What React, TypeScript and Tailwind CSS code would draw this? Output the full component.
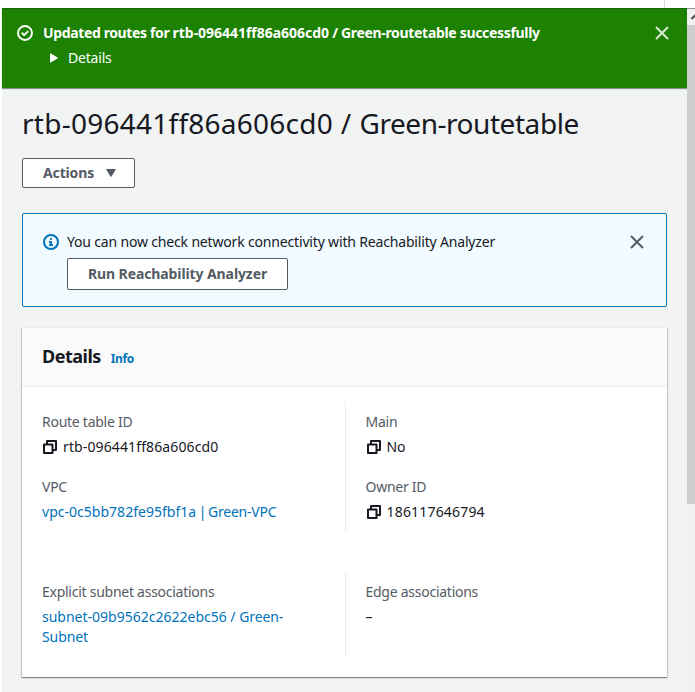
import type { ReactNode } from "react";

function CloseIcon({ className }: { className: string }) {
  return (
    <svg viewBox="0 0 16 16" className={"h-4 w-4 " + className} fill="none" stroke="currentColor" strokeWidth="2" strokeLinecap="butt">
      <path d="M2 2l12 12M14 2L2 14" />
    </svg>
  );
}

function CopyIcon() {
  return (
    <svg viewBox="0 0 16 16" className="h-4 w-4 shrink-0 text-[#16191f]" fill="none" stroke="currentColor" strokeWidth="2" strokeLinejoin="round">
      <path d="M2 5.5h8.5V14H2z" />
      <path d="M5 5.5V2h9v9h-3.5" />
    </svg>
  );
}

function Field({ label, children }: { label: string; children: ReactNode }) {
  return (
    <div className="flex flex-col gap-[5px]">
      <div className="tracking-[-0.26px] text-[#545b64]">{label}</div>
      <div className="flex items-center gap-[5px]">{children}</div>
    </div>
  );
}

export default function App() {
  return (
    <div className="flex h-[692px] w-[695px] flex-col overflow-hidden bg-white font-['Noto_Sans','Open_Sans',sans-serif] text-[14px] leading-5 text-[#16191f]">
      <div className="flex h-2 shrink-0 justify-end pr-[30px]">
        <div className="w-px bg-[#d5dbdb]" />
      </div>
      <div className="flex min-h-0 flex-1 pl-[2px]">
        <div className="flex w-[685px] shrink-0 flex-col bg-[#f2f3f3]">
          <header className="flex h-20 shrink-0 items-start border-t border-[#1a6604] bg-[#1d8102] pt-[14px] pr-[17px] pl-[15px] text-white shadow-[0_1px_1px_0_#879596]">
            <svg viewBox="0 0 16 16" className="mt-[2px] h-4 w-4" fill="none" stroke="currentColor" strokeWidth="1.9">
              <circle cx="8" cy="8" r="7" />
              <path d="M4.7 7.8l2.4 2.2 4.2-3.9" />
            </svg>
            <div className="ml-[10px] flex-1">
              <div className="whitespace-nowrap font-bold tracking-[-0.37px]">
                Updated routes for <span className="tracking-[-0.03px]">rtb-096441ff86a606cd0</span> / <span className="tracking-[-0.32px]">Green-routetable successfully</span>
              </div>
              <div className="mt-[5px] flex items-center gap-[10px] pl-[7px]">
                <svg viewBox="0 0 8 10" className="h-[10px] w-2" fill="currentColor" stroke="currentColor" strokeWidth="1" strokeLinejoin="round"><path d="M.5.8L7.5 5l-7 4.2z" /></svg>
                <span className="tracking-[-0.2px]">Details</span>
              </div>
            </div>
            <CloseIcon className="mt-[2px] text-[#d9ead6]" />
          </header>
          <main className="flex flex-col pt-[17px] pr-5 pl-5">
            <h1 className="h-9 whitespace-nowrap text-[28px] leading-9 tracking-[0.5px]">
              <span className="tracking-[0.25px]">rtb-096441ff86a606cd0</span> / <span className="tracking-[-0.45px]">Green-routetable</span>
            </h1>
            <button className="mt-[17px] flex h-[30px] w-[113px] items-center gap-3 rounded-[2px] border border-[#545b64] bg-white pl-5 font-bold tracking-[-0.14px] text-[#545b64]">
              <span>Actions</span>
              <svg viewBox="0 0 10 8" className="h-2 w-[10px]" fill="currentColor" stroke="currentColor" strokeWidth="1" strokeLinejoin="round"><path d="M.7.5h8.6L5 7.5z" /></svg>
            </button>
            <section className="mt-[25px] flex h-[94px] items-start rounded-[2px] border border-[#0073bb] bg-[#f1faff] pt-[18px] pr-[21px] pl-5">
              <svg viewBox="0 0 16 16" className="mt-[2px] h-4 w-4 text-[#0073bb]" fill="none" stroke="currentColor" strokeWidth="2">
                <circle cx="8" cy="8" r="7" />
                <path d="M8 4v2M6 8h2v3M6 11.2h4" strokeWidth="1.8" />
              </svg>
              <div className="ml-2 flex-1">
                <div className="whitespace-nowrap tracking-[-0.17px]">You can now check network connectivity with Reachability Analyzer</div>
                <button className="mt-[6px] flex h-8 w-[221px] items-center justify-center rounded-[2px] border border-[#545b64] bg-white font-bold tracking-[-0.1px] whitespace-nowrap text-[#545b64]">Run Reachability Analyzer</button>
              </div>
              <CloseIcon className="mt-[2px] text-[#545b64]" />
            </section>
            <section className="mt-5 flex h-[350px] flex-col border-t border-[#eaeded] bg-white shadow-[0_1px_1px_0_rgba(0,28,36,0.3),1px_1px_1px_0_rgba(0,28,36,0.15),-1px_1px_1px_0_rgba(0,28,36,0.15)]">
              <div className="flex h-[59px] shrink-0 items-baseline border-b border-[#eaeded] bg-[#fafafa] pt-[17px] pl-5">
                <h2 className="text-[18px] leading-[22px] font-bold tracking-[-0.5px]">Details</h2>
                <a className="ml-[10px] text-[12px] font-bold tracking-[-0.4px] text-[#0073bb]">Info</a>
              </div>
              <div className="mt-[15px] grid h-[130px] grid-cols-[323px_1fr]">
                <div className="flex flex-col gap-5 pt-[10px] pl-5">
                  <Field label="Route table ID"><CopyIcon /><span className="tracking-[0.12px]">rtb-096441ff86a606cd0</span></Field>
                  <Field label="VPC"><a className="text-[#0073bb]"><span className="tracking-[0.02px]">vpc-0c5bb782fe95fbf1a</span><span className="tracking-[-1.1px]"> | </span><span className="tracking-[-0.2px]">Green-VPC</span></a></Field>
                </div>
                <div className="flex flex-col gap-5 border-l border-[#eaeded] pt-[10px] pl-[19.5px]">
                  <Field label="Main"><CopyIcon /><span className="tracking-[-0.2px]">No</span></Field>
                  <Field label="Owner ID"><CopyIcon /><span className="tracking-[0.18px]">186117646794</span></Field>
                </div>
              </div>
              <div className="mt-10 grid h-[86px] grid-cols-[323px_1fr]">
                <div className="pt-[10px] pl-5">
                  <Field label="Explicit subnet associations"><a className="text-[#0073bb]">subnet-09b9562c2622ebc56 / <span className="tracking-[-0.1px]">Green-<br />Subnet</span></a></Field>
                </div>
                <div className="border-l border-[#eaeded] pt-[10px] pl-[19.5px]">
                  <Field label="Edge associations"><span>–</span></Field>
                </div>
              </div>
            </section>
          </main>
        </div>
        <div className="flex flex-1 flex-col overflow-hidden border-t border-[#879596] bg-[#f0f0f0]">
          <svg viewBox="0 0 8 16" className="h-4 w-2 shrink-0" fill="none" stroke="#505050" strokeWidth="2"><path d="M4.5 10L9 5.5" /></svg>
          <div className="h-[479px] bg-[#cdcdcd]" />
        </div>
      </div>
    </div>
  );
}
